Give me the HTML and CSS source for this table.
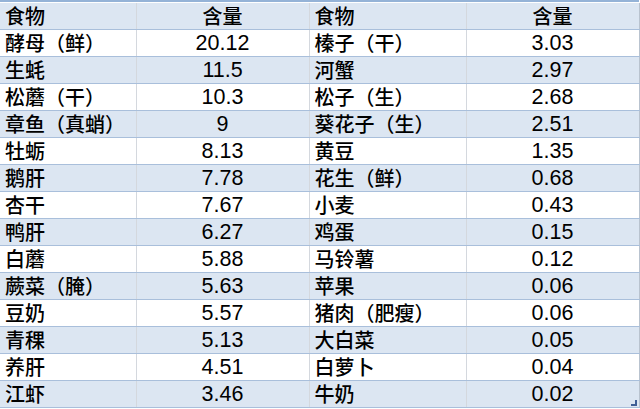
FILE: index.html
```html
<!DOCTYPE html>
<html lang="zh">
<head>
<meta charset="utf-8">
<link rel="stylesheet" href="styles.css">
</head>
<body>
<div class="sheet">
  <table class="grid">
    <colgroup>
      <col class="c1"><col class="c2"><col class="c3"><col class="c4">
    </colgroup>
    <thead>
      <tr><th class="name">食物</th><th class="num">含量</th><th class="name">食物</th><th class="num">含量</th></tr>
    </thead>
    <tbody>
      <tr><td class="name">酵母（鲜）</td><td class="num">20.12</td><td class="name">榛子（干）</td><td class="num">3.03</td></tr>
      <tr><td class="name">生蚝</td><td class="num">11.5</td><td class="name">河蟹</td><td class="num">2.97</td></tr>
      <tr><td class="name">松蘑（干）</td><td class="num">10.3</td><td class="name">松子（生）</td><td class="num">2.68</td></tr>
      <tr><td class="name">章鱼（真蛸）</td><td class="num">9</td><td class="name">葵花子（生）</td><td class="num">2.51</td></tr>
      <tr><td class="name">牡蛎</td><td class="num">8.13</td><td class="name">黄豆</td><td class="num">1.35</td></tr>
      <tr><td class="name">鹅肝</td><td class="num">7.78</td><td class="name">花生（鲜）</td><td class="num">0.68</td></tr>
      <tr><td class="name">杏干</td><td class="num">7.67</td><td class="name">小麦</td><td class="num">0.43</td></tr>
      <tr><td class="name">鸭肝</td><td class="num">6.27</td><td class="name">鸡蛋</td><td class="num">0.15</td></tr>
      <tr><td class="name">白蘑</td><td class="num">5.88</td><td class="name">马铃薯</td><td class="num">0.12</td></tr>
      <tr><td class="name">蕨菜（腌）</td><td class="num">5.63</td><td class="name">苹果</td><td class="num">0.06</td></tr>
      <tr><td class="name">豆奶</td><td class="num">5.57</td><td class="name">猪肉（肥瘦）</td><td class="num">0.06</td></tr>
      <tr><td class="name">青稞</td><td class="num">5.13</td><td class="name">大白菜</td><td class="num">0.05</td></tr>
      <tr><td class="name">养肝</td><td class="num">4.51</td><td class="name">白萝卜</td><td class="num">0.04</td></tr>
      <tr><td class="name">江虾</td><td class="num">3.46</td><td class="name">牛奶</td><td class="num">0.02</td></tr>
    </tbody>
  </table>
  <span class="handle"></span>
</div>
</body>
</html>
```
FILE: styles.css
```css
html, body {
  margin: 0;
  padding: 0;
  background: #ffffff;
}
body {
  width: 640px;
  height: 409px;
  overflow: hidden;
}
.sheet {
  position: relative;
  width: 639px;
  border-top: 2px solid #95b3d7;
  padding-top: 1px;
  background: #ffffff;
}
.grid {
  border-collapse: collapse;
  table-layout: fixed;
  width: 639px;
  color: #000000;
  font-family: "Liberation Sans", "Noto Sans CJK SC", sans-serif;
}
.c1 { width: 136px; }
.c2 { width: 173px; }
.c3 { width: 157px; }
.c4 { width: 173px; }
.grid th, .grid td {
  height: 26px;
  padding: 0;
  border-bottom: 1px solid #a9bfdb;
  border-right: 1px solid #d4d8de;
  font-weight: normal;
  line-height: 26px;
  white-space: nowrap;
  vertical-align: bottom;
}
.grid tr > *:last-child {
  border-right: 1px solid #b9c3cf;
}
.grid thead tr,
.grid tbody tr:nth-child(even) {
  background: #dce6f2;
}
.grid tbody tr:nth-child(odd) {
  background: #ffffff;
}
.name {
  text-align: left;
  padding-left: 5px !important;
  font-family: "Noto Sans CJK SC", sans-serif;
  font-size: 20px;
  font-weight: 500 !important;
}
.num {
  text-align: center;
  font-size: 21.5px;
}
th.num {
  font-family: "Noto Sans CJK SC", sans-serif;
  font-size: 20px;
  font-weight: 500;
}
.handle {
  position: absolute;
  right: 2px;
  bottom: 2px;
  width: 4px;
  height: 4px;
  border-right: 2px solid #3f5f96;
  border-bottom: 2px solid #3f5f96;
}
```
